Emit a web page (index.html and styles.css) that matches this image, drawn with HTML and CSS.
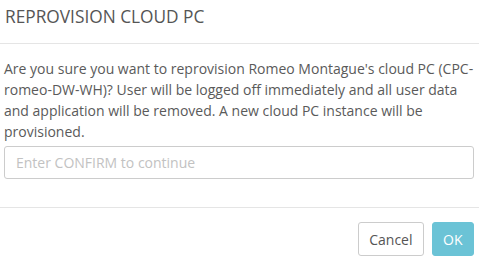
FILE: index.html
```html
<!DOCTYPE html>
<html>
<head>
<meta charset="utf-8">
<link rel="stylesheet" href="styles.css">
</head>
<body>
<div class="modal">
  <div class="modal-header">
    <h4 class="modal-title">REPROVISION CLOUD PC</h4>
  </div>
  <div class="modal-body">
    <p class="message">Are you sure you want to reprovision Romeo Montague's cloud PC (CPC-romeo-DW-WH)? User will be logged off immediately and all user data and application will be removed. A new cloud PC instance will be provisioned.</p>
    <input class="confirm-input" type="text" placeholder="Enter CONFIRM to continue">
  </div>
  <div class="modal-footer">
    <button class="btn btn-default">Cancel</button>
    <button class="btn btn-primary">OK</button>
  </div>
</div>
</body>
</html>
```
FILE: styles.css
```css
html, body {
  margin: 0;
  padding: 0;
  background: #fff;
}
body {
  font-family: "Open Sans", "DejaVu Sans", sans-serif;
  color: #555;
  width: 479px;
  height: 263px;
  overflow: hidden;
}
.modal {
  display: flex;
  flex-direction: column;
}
.modal-header {
  padding: 5px 5px 14px 5px;
  border-bottom: 1px solid #e5e5e5;
}
.modal-title {
  margin: 0;
  font-size: 17.3px;
  line-height: 24px;
  font-weight: 400;
  color: #555;
}
.modal-body {
  padding: 14px 5px 28px 4px;
  border-bottom: 1px solid #e5e5e5;
}
.message {
  margin: 0 0 4px 0;
  font-size: 14px;
  line-height: 21px;
  color: #5a5a5a;
}
.confirm-input {
  display: block;
  box-sizing: border-box;
  width: 100%;
  height: 33px;
  margin: 0;
  padding: 0 11px;
  border: 1px solid #ccc;
  border-radius: 3px;
  font-family: inherit;
  font-size: 14px;
  color: #555;
  background: #fff;
  outline: none;
}
.confirm-input::placeholder {
  color: #c2c2c2;
}
.modal-footer {
  display: flex;
  justify-content: flex-end;
  gap: 8px;
  padding: 14px 5px 0 4px;
}
.btn {
  box-sizing: border-box;
  height: 34px;
  padding: 0 10px;
  font-family: inherit;
  font-size: 14px;
  border-radius: 3px;
  border: 1px solid transparent;
  cursor: pointer;
}
.btn-default {
  background: #fff;
  border-color: #ccc;
  color: #555;
}
.btn-primary {
  background: #6bc3d6;
  border-color: #6bc3d6;
  color: #fff;
  padding: 0 10.5px;
}
```
